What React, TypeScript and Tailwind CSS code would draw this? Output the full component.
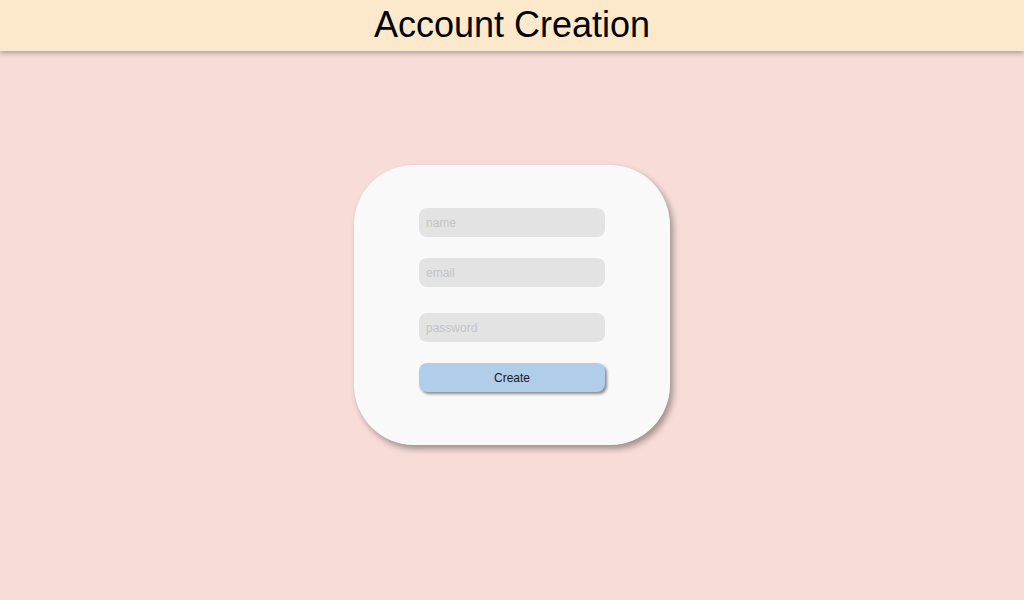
export default function App() {
    return (
        <div className="min-h-[600px] w-full bg-[#f7dcd8] font-['Liberation_Sans',Arial,sans-serif]">
            <header className="h-[51px] bg-[#fce9cc] shadow-[0_2px_5px_rgba(0,0,0,0.3)] flex items-center justify-center pb-[2px]">
                <h1 className="text-[36px] leading-none text-black">Account Creation</h1>
            </header>
            <div className="flex justify-center pt-[114px]">
                <div className="w-[316px] h-[280px] bg-[#f9f9f9] rounded-[60px] shadow-[3px_4px_6px_rgba(0,0,0,0.35)] flex flex-col items-center pt-[43px]">
                    <input
                        type="text"
                        placeholder="name"
                        className="w-[186px] h-[29px] rounded-[8px] bg-[#e3e3e3] px-[7px] text-[12px] outline-none placeholder:text-[#c3c3c3]"
                    />
                    <input
                        type="email"
                        placeholder="email"
                        className="mt-[21px] w-[186px] h-[29px] rounded-[8px] bg-[#e3e3e3] px-[7px] text-[12px] outline-none placeholder:text-[#c3c3c3]"
                    />
                    <input
                        type="password"
                        placeholder="password"
                        className="mt-[26px] w-[186px] h-[29px] rounded-[8px] bg-[#e3e3e3] px-[7px] text-[12px] outline-none placeholder:text-[#c3c3c3]"
                    />
                    <button className="mt-[21px] w-[186px] h-[29px] rounded-[8px] bg-[#b0cdea] text-[12px] text-[#1a1a1a] shadow-[2px_2px_3px_rgba(0,0,0,0.45)]">
                        Create
                    </button>
                </div>
            </div>
        </div>
    );
}
